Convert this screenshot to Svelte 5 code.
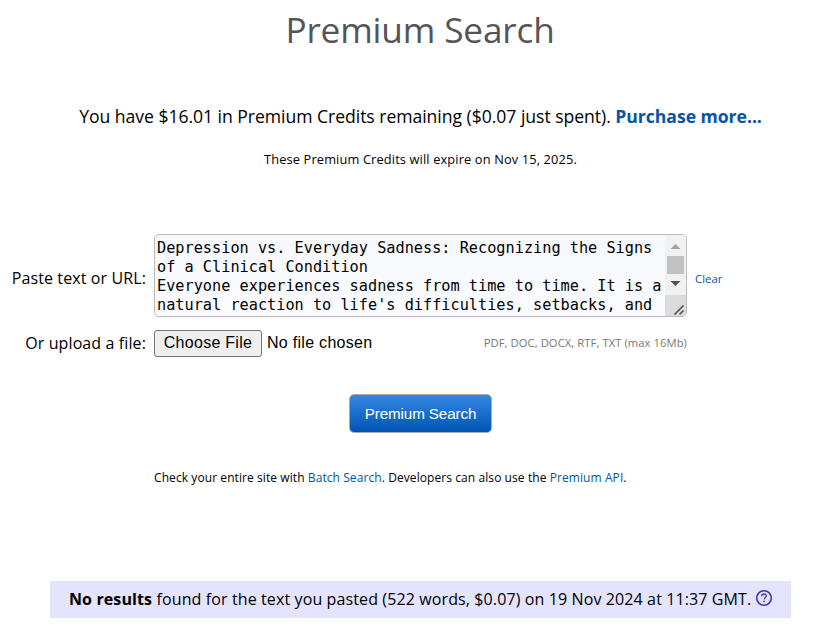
<script lang="ts">
  const lines = [
    'Depression vs. Everyday Sadness: Recognizing the Signs',
    'of a Clinical Condition',
    'Everyone experiences sadness from time to time. It is a',
    "natural reaction to life's difficulties, setbacks, and",
  ];
  const formats = ['PDF', 'DOC', 'DOCX', 'RTF', 'TXT'];
</script>

<main>
  <h1>Premium Search</h1>
  <p class="credits">You have $16.01 in Premium Credits remaining ($0.07 just spent). <a href="#buy"><b>Purchase more...</b></a></p>
  <p class="expiry">These Premium Credits will expire on Nov 15, 2025.</p>

  <form>
    <div class="row paste">
      <span class="label">Paste text or URL:</span>
      <div class="textbox">
        <div class="lines">
          {#each lines as line}
            <div>{line}</div>
          {/each}
        </div>
        <svg class="scroll" width="21" height="81" viewBox="0 0 21 81">
          <path d="M0 0h21v60H0z" fill="#f1f1f1" />
          <path d="M5.5 14l5-5 5 5z" fill="#a3a3a3" />
          <path d="M2 21h17v18H2z" fill="#c1c1c1" />
          <path d="M5.5 46h10l-5 5z" fill="#505050" />
          <path d="M0 60h21v21H0z" fill="#dcdcdc" />
          <path d="M9.5 79.5l9-9M14.5 79.5l4-4" stroke="#505050" stroke-width="1.6" />
        </svg>
      </div>
      <a class="clear" href="#clear">Clear</a>
    </div>
    <div class="row upload">
      <span class="label">Or upload a file:</span>
      <div class="file">
        <button type="button" class="choose">Choose File</button>
        <span class="chosen">No file chosen</span>
        <span class="formats">{formats.join(', ')} (max 16Mb)</span>
      </div>
    </div>
    <button type="button" class="search">Premium Search</button>
  </form>

  <p class="more">Check your entire site with <a href="#batch">Batch Search</a>. Developers can also use the <a href="#api">Premium API</a>.</p>

  <div class="results">
    <span><b>No results</b> found for the text you pasted (522 words, $0.07) on 19 Nov 2024 at 11:37 GMT.</span>
    <svg width="18" height="18" viewBox="0 0 18 18" fill="none" stroke="#4137b5">
      <circle cx="9" cy="9" r="7.3" stroke-width="1.6" />
      <path d="M6.7 7.2C6.7 5.8 7.7 5 9 5s2.3.8 2.3 2c0 1.5-2.2 1.7-2.2 3.4" stroke-width="1.3" />
      <path d="M9.1 11.8v1.5" stroke-width="1.5" />
    </svg>
  </div>
</main>

<style>
  :global(body) { margin: 0; background: #fff; overflow: hidden; }
  main { width: 819px; height: 630px; overflow: hidden; font-family: "Open Sans", sans-serif; color: #000; white-space: nowrap; }
  h1, p { margin: 0; }
  a { color: #0654a5; text-decoration: none; }
  h1 { padding: 5px 0 0 21px; height: 49px; line-height: 48px; font-size: 35.2px; letter-spacing: -.16px; font-weight: 400; text-align: center; color: #555; }
  .credits { padding: 49px 0 0 22px; height: 26px; line-height: 26px; font-size: 17.6px; letter-spacing: -.04px; text-align: center; }
  .expiry { padding: 20px 0 0 22px; height: 20px; line-height: 20px; font-size: 12.8px; letter-spacing: .14px; text-align: center; }
  form { padding-top: 65px; }
  .row { display: grid; grid-template-columns: 146px 533px auto; column-gap: 8px; align-items: center; }
  .label { text-align: right; font-size: 16px; letter-spacing: .11px; }
  .paste { height: 83px; }
  .paste .label { padding-top: 4px; }
  .textbox { display: flex; justify-content: space-between; box-sizing: border-box; height: 83px; border: 1px solid #bbb; border-radius: 5px; background: linear-gradient(#f6f8fb, #fafcff); overflow: hidden; }
  .lines { padding: 4px 0 0 2px; font-family: "DejaVu Sans Mono", monospace; font-size: 15.24px; line-height: 19px; }
  .scroll { display: block; flex: none; }
  .clear { padding-top: 6px; font-size: 11.2px; letter-spacing: .1px; }
  .upload { height: 27px; margin-top: 13px; }
  .upload .label { padding-bottom: 2px; }
  .file { display: flex; align-items: center; }
  .choose { box-sizing: border-box; width: 108px; height: 27px; padding: 0 0 2px; border: 1px solid #767676; border-radius: 3px; background: #efefef; font-family: "Liberation Sans", sans-serif; font-size: 16px; letter-spacing: .28px; color: #000; }
  .chosen { margin-left: 5px; padding-bottom: 2px; font-family: "Liberation Sans", sans-serif; font-size: 16px; letter-spacing: .29px; }
  .formats { margin-left: auto; padding-bottom: 2px; font-size: 11.2px; letter-spacing: .09px; color: #777; }
  .search { display: block; box-sizing: border-box; width: 143px; height: 39px; margin: 37px 0 0 349px; padding: 0; border: 1px solid #aaa; border-radius: 5px; background: linear-gradient(#3388e5, #0055b3); font-family: "Liberation Sans", sans-serif; font-size: 15.2px; letter-spacing: -.1px; color: #fff; }
  .more { padding: 35px 0 0 154px; height: 20px; line-height: 20px; font-size: 12px; letter-spacing: .08px; }
  .results { display: flex; align-items: center; box-sizing: border-box; width: 741px; height: 37px; margin: 93px 0 0 50px; padding-left: 19px; background: #e4e4ff; font-size: 16px; letter-spacing: .115px; }
  .results span { padding-bottom: 2px; }
  .results svg { margin: -3px 0 0 4px; }
</style>
